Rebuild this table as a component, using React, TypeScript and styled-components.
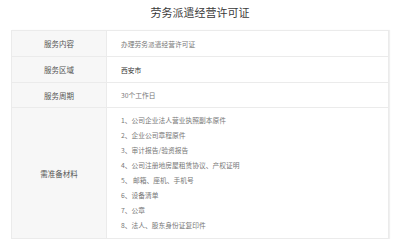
import React from "react";
import styled, { createGlobalStyle } from "styled-components";

const GlobalStyle = createGlobalStyle`
  html, body {
    margin: 0;
    padding: 0;
    background: #fff;
    font-family: "Noto Sans CJK SC", "Noto Sans", sans-serif;
  }
`;

const Page = styled.div`
  width: 401px;
  padding: 0 12px 0 11px;
  box-sizing: border-box;
`;

const Title = styled.h1`
  margin: 0 0 5px;
  height: 25px;
  line-height: 25px;
  text-align: center;
  font-size: 11px;
  font-weight: 400;
  color: #3a3a3a;
`;

const Table = styled.div`
  display: grid;
  grid-template-columns: 95px 1fr;
  border: 1px solid #ebebeb;
  box-shadow: 1px 0 1px rgba(0, 0, 0, 0.06);
`;

const Label = styled.div<{ $h: number; $last?: boolean }>`
  height: ${(p) => p.$h}px;
  display: flex;
  align-items: center;
  justify-content: center;
  background: #f7f7f7;
  border-right: 1px solid #ebebeb;
  border-bottom: ${(p) => (p.$last ? "none" : "1px solid #ebebeb")};
  font-size: 7.5px;
  color: #555;
`;

const Value = styled.div<{ $h: number; $last?: boolean; $dark?: boolean }>`
  height: ${(p) => p.$h}px;
  display: flex;
  align-items: center;
  padding-left: 14px;
  border-bottom: ${(p) => (p.$last ? "none" : "1px solid #ebebeb")};
  font-size: 6.75px;
  color: ${(p) => (p.$dark ? "#333" : "#777")};
`;

const List = styled.ul`
  list-style: none;
  margin: 0;
  padding: 5px 0 5px 14px;
  font-size: 6.75px;
  color: #777;
`;

const Item = styled.li`
  height: 15px;
  line-height: 15px;
`;

const materials = [
  "1、公司企业法人营业执照副本原件",
  "2、企业公司章程原件",
  "3、审计报告/验资报告",
  "4、公司注册地房屋租赁协议、产权证明",
  "5、 邮箱、座机、手机号",
  "6、设备清单",
  "7、公章",
  "8、法人、股东身份证复印件",
];

export default function App() {
  return (
    <Page>
      <GlobalStyle />
      <Title>劳务派遣经营许可证</Title>
      <Table>
        <Label $h={25}>服务内容</Label>
        <Value $h={25}>办理劳务派遣经营许可证</Value>
        <Label $h={25}>服务区域</Label>
        <Value $h={25} $dark>西安市</Value>
        <Label $h={24}>服务周期</Label>
        <Value $h={24}>30个工作日</Value>
        <Label $h={130} $last>需准备材料</Label>
        <List>
          {materials.map((m) => (
            <Item key={m}>{m}</Item>
          ))}
        </List>
      </Table>
    </Page>
  );
}
